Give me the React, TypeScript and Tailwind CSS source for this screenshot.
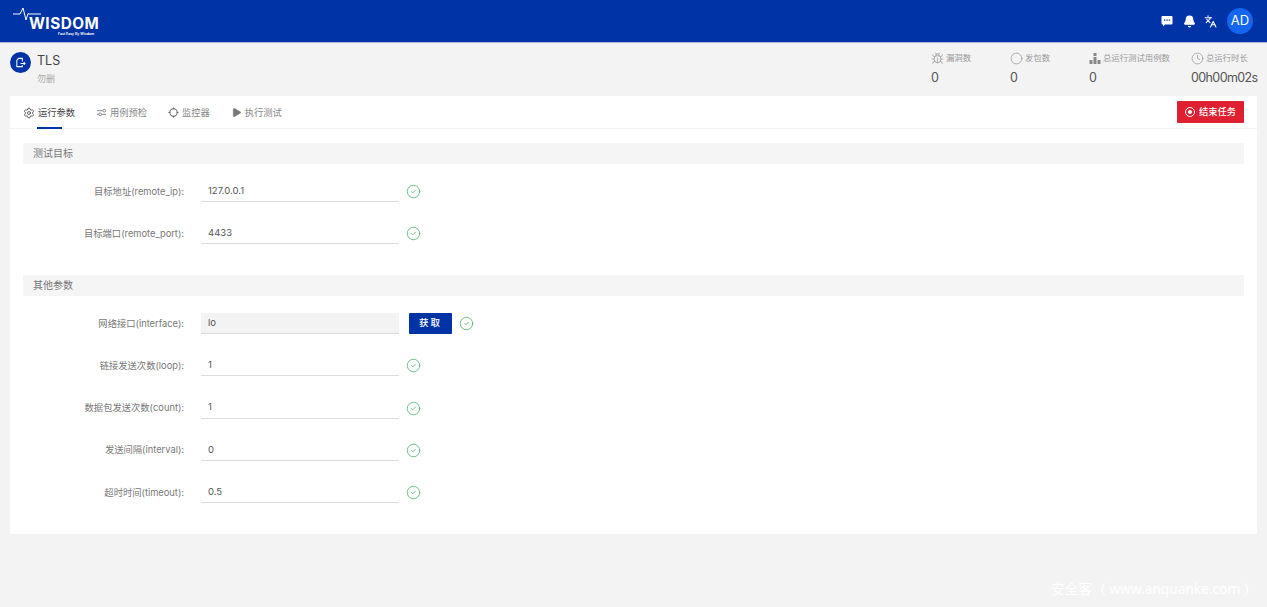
import { Settings, Play, Bell, Languages, Clock, CircleCheck, Circle, Bug } from 'lucide-react';

const sans = '"Inter", "Noto Sans CJK SC", sans-serif';

function Logo() {
  return (
    <div className="relative h-[42px] w-[110px] text-white">
      <svg className="absolute left-[12px] top-[6px]" width="32" height="16" viewBox="0 0 32 16" fill="none" stroke="white" strokeWidth="1">
        <path d="M1 8H8L11 2L14 14L16 7.5L17 8H29" />
      </svg>
      <span className="absolute left-[29px] top-[16px] text-[15.3px] font-bold leading-[16px] tracking-[0.5px]">WISDOM</span>
      <span className="absolute left-[58px] top-[32px] text-[3.5px] font-semibold leading-[4px]">Fast Easy By Wisdom</span>
    </div>
  );
}

function Stat({ icon, label, value, width }: { icon: React.ReactNode; label: string; value: string; width: string }) {
  return (
    <div className={width}>
      <div className="flex h-[16px] items-center gap-[2px] text-[8.4px] text-[#999]">
        {icon}
        <span>{label}</span>
      </div>
      <div className="mt-[2px] text-[12.5px] leading-[20px] tracking-[-0.6px] text-[#555]">{value}</div>
    </div>
  );
}

function Tab({ icon, label, active }: { icon: React.ReactNode; label: string; active?: boolean }) {
  return (
    <div className={`relative flex h-[33px] items-center gap-[3px] pt-[1px] text-[9.25px] ${active ? 'text-[#444]' : 'text-[#888]'}`}>
      {icon}
      <span>{label}</span>
      {active && <div className="absolute bottom-0 left-[14px] h-[2px] w-[25px] bg-[#0033a5]" />}
    </div>
  );
}

function Section({ title }: { title: string }) {
  return <div className="flex h-[21px] items-center bg-[#f5f5f5] pl-[10px] text-[10px] text-[#777]">{title}</div>;
}

function Field({ label, value, disabled, button }: { label: string; value: string; disabled?: boolean; button?: boolean }) {
  return (
    <div className="flex h-[21px] items-center">
      <div className="w-[178px] pr-[17px] text-right text-[9.3px] text-[#777]">{label}:</div>
      <div className={`flex h-[21px] w-[198px] items-center border-b border-[#ddd] pl-[7px] text-[9.5px] text-[#555] ${disabled ? 'bg-[#f3f3f3]' : ''}`}>{value}</div>
      {button && (
        <button className="ml-[10px] h-[21px] w-[43px] rounded-[1px] bg-[#0033a5] text-[9.5px] font-medium tracking-[2px] text-white">获取</button>
      )}
      <CircleCheck className="ml-[7px] h-[15px] w-[15px] text-[#5cb87a]" strokeWidth={1.4} />
    </div>
  );
}

export default function App() {
  return (
    <div className="relative h-[607px] w-[1267px] overflow-hidden bg-[#f3f3f3]" style={{ fontFamily: sans }}>
      {/* top bar */}
      <header className="flex h-[43px] items-center justify-between border-b border-[#a9b8dc] bg-[#0033a5] pr-[14px]">
        <Logo />
        <div className="flex items-center text-white">
          <svg width="12" height="12" viewBox="0 0 12 12">
            <path d="M1.5 1h9A1 1 0 0 1 11.5 2v6.5a1 1 0 0 1-1 1H4L2 11.5V9.5H1.5a1 1 0 0 1-1-1V2a1 1 0 0 1 1-1z" fill="white" />
            <path d="M3 4.5h1.3v1.3H3zM5.4 4.5h1.3v1.3H5.4zM7.8 4.5h1.3v1.3H7.8z" fill="#0033a5" />
          </svg>
          <Bell className="ml-[10px] h-[13px] w-[13px]" fill="white" />
          <Languages className="ml-[8px] h-[13px] w-[13px]" />
          <div className="ml-[10px] flex h-[26px] w-[26px] items-center justify-center rounded-full bg-[#1465f0] text-[13px]">AD</div>
        </div>
      </header>

      {/* task summary */}
      <div className="flex h-[53px] justify-between pl-[10px] pr-[10px]">
        <div className="flex pt-[9px]">
          <div className="flex h-[21px] w-[21px] items-center justify-center rounded-full bg-[#0033a5]">
            <svg width="11" height="11" viewBox="0 0 12 12" fill="none" stroke="white" strokeWidth="1.1">
              <path d="M8 5V1.5H4L2 3.5v7h6V9M6 7h5M9.5 5.5 11 7 9.5 8.5" />
            </svg>
          </div>
          <div className="ml-[6px]">
            <div className="text-[12.5px] leading-[18px] text-[#444]">TLS</div>
            <div className="mt-[3px] text-[9px] leading-[12px] text-[#aaa]">勿删</div>
          </div>
        </div>
        <div className="flex pt-[7px]">
          <Stat width="w-[79px]" label="漏洞数" value="0" icon={<Bug className="h-[13px] w-[13px] text-[#777]" strokeWidth={1} />} />
          <Stat width="w-[79px]" label="发包数" value="0" icon={<Circle className="h-[13px] w-[13px] text-[#777]" strokeWidth={1} />} />
          <Stat width="w-[102px]" label="总运行测试用例数" value="0" icon={
            <svg width="12" height="11" viewBox="0 0 11 11" fill="#888"><path d="M0 7h3v4H0zM4 4h3v7H4zM4 0h3v3H4zM8 7h3v4H8z" /></svg>
          } />
          <Stat width="w-[66px]" label="总运行时长" value="00h00m02s" icon={<Clock className="h-[13px] w-[13px] text-[#777]" strokeWidth={1} />} />
        </div>
      </div>

      {/* main card */}
      <main className="mx-[10px] h-[438px] bg-white">
        <div className="flex h-[33px] items-center justify-between border-b border-[#f3f3f3] pl-[13px] pr-[13px]">
          <div className="flex gap-[21px]">
            <Tab active label="运行参数" icon={<Settings className="h-[12px] w-[12px] text-[#333]" strokeWidth={1.5} />} />
            <Tab label="用例预检" icon={
              <svg width="11" height="11" viewBox="0 0 12 12" fill="none" stroke="#777" strokeWidth="0.9">
                <path d="M1 4h6.5M1 8h2" />
                <circle cx="9" cy="4" r="1.5" />
                <circle cx="4.5" cy="8" r="1.5" />
                <path d="M6 8h5" />
              </svg>
            } />
            <Tab label="监控器" icon={
              <svg width="11" height="11" viewBox="0 0 12 12" fill="none" stroke="#666" strokeWidth="1.1">
                <circle cx="6" cy="6" r="4" />
                <path d="M6 .5v2M6 9.5v2M.5 6h2M9.5 6h2" />
              </svg>
            } />
            <Tab label="执行测试" icon={<Play className="h-[11px] w-[11px] text-[#777]" fill="#777" strokeWidth={1} />} />
          </div>
          <button className="flex h-[22px] w-[67px] items-center justify-center gap-[4px] rounded-[1px] bg-[#e02030] text-[9.25px] font-medium text-white">
            <span className="flex h-[10px] w-[10px] items-center justify-center rounded-full border border-white">
              <span className="h-[4px] w-[4px] rounded-full bg-white" />
            </span>
            结束任务
          </button>
        </div>

        <div className="px-[13px] pt-[14px]">
          <Section title="测试目标" />
          <div className="mt-[17px] flex flex-col gap-[21px]">
            <Field label="目标地址(remote_ip)" value="127.0.0.1" />
            <Field label="目标端口(remote_port)" value="4433" />
          </div>
          <div className="mt-[31px]">
            <Section title="其他参数" />
          </div>
          <div className="mt-[17px] flex flex-col gap-[21.3px]">
            <Field label="网络接口(interface)" value="lo" disabled button />
            <Field label="链接发送次数(loop)" value="1" />
            <Field label="数据包发送次数(count)" value="1" />
            <Field label="发送间隔(interval)" value="0" />
            <Field label="超时时间(timeout)" value="0.5" />
          </div>
        </div>
      </main>

      {/* watermark */}
      <div className="absolute left-[1051px] top-[579px] text-[13.7px] leading-[19px] text-white" style={{ fontFamily: '"Noto Sans", "Noto Sans CJK SC", sans-serif' }}>
        安全客（ www.anquanke.com ）
      </div>
    </div>
  );
}
